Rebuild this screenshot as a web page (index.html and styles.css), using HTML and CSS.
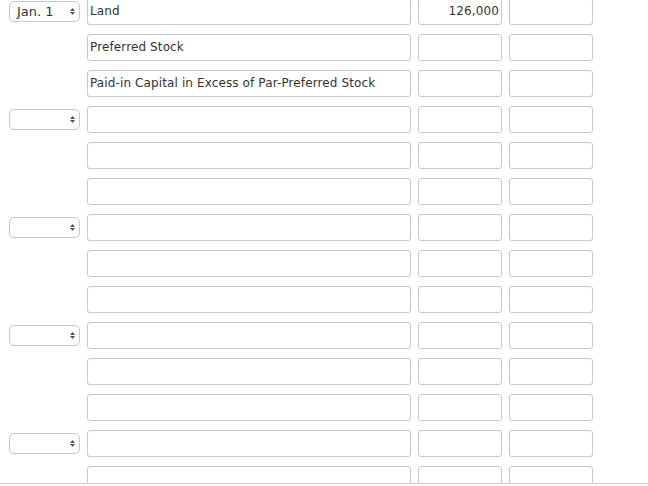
FILE: index.html
```html
<!DOCTYPE html>
<html lang="en">
<head>
<meta charset="utf-8">
<title>Journal entry</title>
<link rel="stylesheet" href="styles.css">
</head>
<body>
<div class="sheet">
  <div class="rows">
    <div class="row">
      <div class="date"><span class="date-text">Jan. 1</span><svg class="arrows" width="5" height="7" viewBox="0 0 5 7"><polygon points="0,3 2.5,0 5,3"/><polygon points="0,4 5,4 2.5,7"/></svg></div>
      <div class="field account">Land</div>
      <div class="field amount">126,000</div>
      <div class="field amount"></div>
    </div>
    <div class="row">
      <div class="date-blank"></div>
      <div class="field account">Preferred Stock</div>
      <div class="field amount"></div>
      <div class="field amount"></div>
    </div>
    <div class="row">
      <div class="date-blank"></div>
      <div class="field account">Paid-in Capital in Excess of Par-Preferred Stock</div>
      <div class="field amount"></div>
      <div class="field amount"></div>
    </div>
    <div class="row">
      <div class="date"><span class="date-text"></span><svg class="arrows" width="5" height="7" viewBox="0 0 5 7"><polygon points="0,3 2.5,0 5,3"/><polygon points="0,4 5,4 2.5,7"/></svg></div>
      <div class="field account"></div>
      <div class="field amount"></div>
      <div class="field amount"></div>
    </div>
    <div class="row">
      <div class="date-blank"></div>
      <div class="field account"></div>
      <div class="field amount"></div>
      <div class="field amount"></div>
    </div>
    <div class="row">
      <div class="date-blank"></div>
      <div class="field account"></div>
      <div class="field amount"></div>
      <div class="field amount"></div>
    </div>
    <div class="row">
      <div class="date"><span class="date-text"></span><svg class="arrows" width="5" height="7" viewBox="0 0 5 7"><polygon points="0,3 2.5,0 5,3"/><polygon points="0,4 5,4 2.5,7"/></svg></div>
      <div class="field account"></div>
      <div class="field amount"></div>
      <div class="field amount"></div>
    </div>
    <div class="row">
      <div class="date-blank"></div>
      <div class="field account"></div>
      <div class="field amount"></div>
      <div class="field amount"></div>
    </div>
    <div class="row">
      <div class="date-blank"></div>
      <div class="field account"></div>
      <div class="field amount"></div>
      <div class="field amount"></div>
    </div>
    <div class="row">
      <div class="date"><span class="date-text"></span><svg class="arrows" width="5" height="7" viewBox="0 0 5 7"><polygon points="0,3 2.5,0 5,3"/><polygon points="0,4 5,4 2.5,7"/></svg></div>
      <div class="field account"></div>
      <div class="field amount"></div>
      <div class="field amount"></div>
    </div>
    <div class="row">
      <div class="date-blank"></div>
      <div class="field account"></div>
      <div class="field amount"></div>
      <div class="field amount"></div>
    </div>
    <div class="row">
      <div class="date-blank"></div>
      <div class="field account"></div>
      <div class="field amount"></div>
      <div class="field amount"></div>
    </div>
    <div class="row">
      <div class="date"><span class="date-text"></span><svg class="arrows" width="5" height="7" viewBox="0 0 5 7"><polygon points="0,3 2.5,0 5,3"/><polygon points="0,4 5,4 2.5,7"/></svg></div>
      <div class="field account"></div>
      <div class="field amount"></div>
      <div class="field amount"></div>
    </div>
    <div class="row">
      <div class="date-blank"></div>
      <div class="field account"></div>
      <div class="field amount"></div>
      <div class="field amount"></div>
    </div>
  </div>
</div>
</body>
</html>
```

FILE: styles.css
```css
html, body {
  margin: 0;
  padding: 0;
  background: #fff;
}

body {
  font-family: "DejaVu Sans", Verdana, sans-serif;
  font-size: 12px;
  color: #333;
}

.sheet {
  height: 483px;
  overflow: hidden;
  border-bottom: 1px solid #c9cbcf;
}

.rows {
  margin-top: -2px;
  padding-left: 9px;
  display: flex;
  flex-direction: column;
  gap: 9px;
}

.row {
  display: flex;
  align-items: center;
  gap: 7px;
  height: 27px;
}

.date,
.date-blank {
  box-sizing: border-box;
  width: 71px;
  height: 21px;
  flex: none;
}

.date {
  display: flex;
  align-items: center;
  justify-content: space-between;
  border: 1px solid #c8c8c8;
  border-radius: 5px;
  padding: 0 4px 0 7px;
  background: #fff;
}

.date-text {
  font-size: 13px;
  line-height: 19px;
  white-space: nowrap;
}

.arrows {
  display: block;
  fill: #555;
}

.field {
  box-sizing: border-box;
  height: 27px;
  border: 1px solid #c8c8c8;
  border-radius: 3px;
  padding: 0 2px;
  line-height: 25px;
  letter-spacing: 0.12px;
  white-space: nowrap;
  overflow: hidden;
  flex: none;
  background: #fff;
}

.account {
  width: 324px;
}

.amount {
  width: 84px;
  text-align: right;
}
```
